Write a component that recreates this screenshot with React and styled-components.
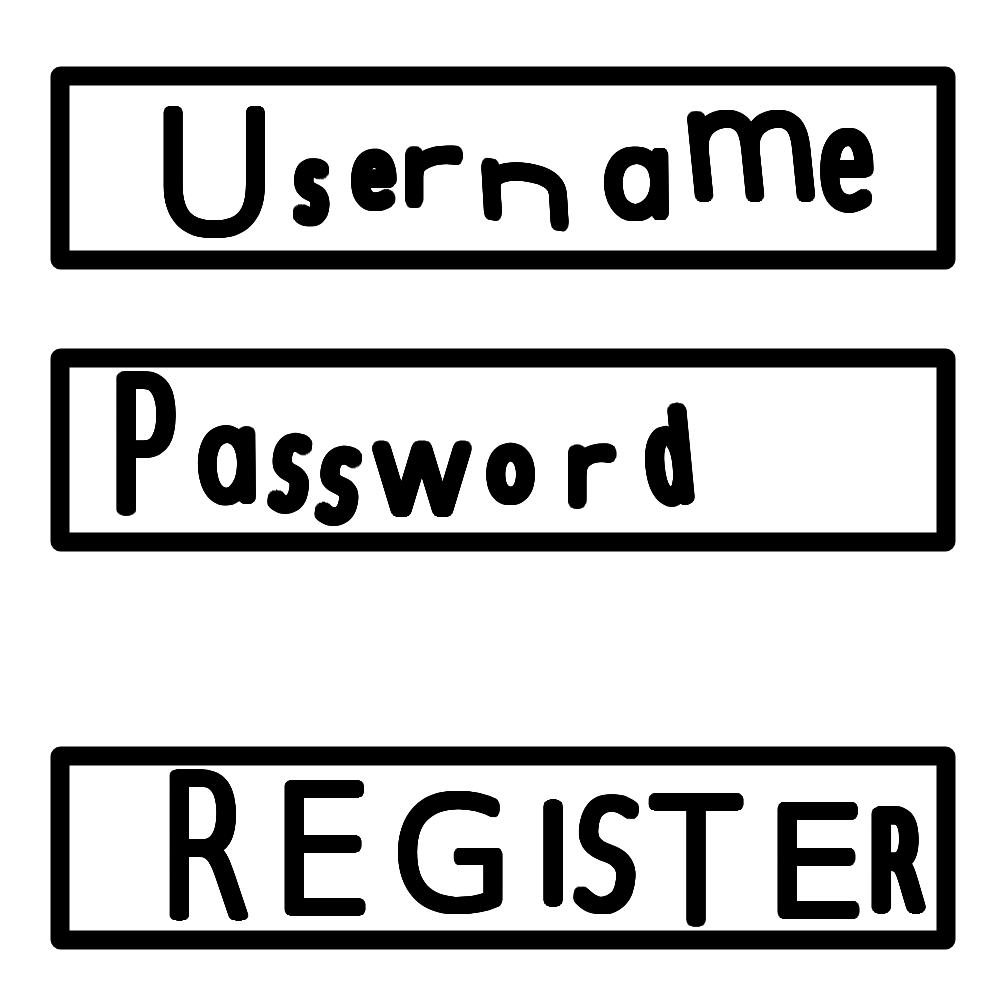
import React, { useMemo } from "react";
import styled, { createGlobalStyle } from "styled-components";

const STROKE = 19.6;
const SIZE = 100;

const FACES = {
  plain: {
    family: '"DejaVu Sans", sans-serif',
    weight: 200,
    style: "normal",
    stem: 5.4,
  },
  script: {
    family: '"Open Sans", sans-serif',
    weight: 300,
    style: "italic",
    stem: 6,
  },
};

const GlobalStyle = createGlobalStyle`
  * { box-sizing: border-box; }
  body { margin: 0; background: #fff; }
`;

const Page = styled.main`
  display: flex;
  flex-direction: column;
  width: 1000px;
  height: 1000px;
  padding: 66px 44px 50px 50px;
  background: #fff;
  overflow: hidden;
`;

const Box = styled.div`
  flex: none;
  width: 905px;
  height: 203px;
  margin-bottom: ${(p) => p.$after}px;
  border: 19px solid #000;
  border-radius: 10px;
  background: #fff;
  transform: translate(0.5px, 0.5px);
`;

const Word = styled.div`
  display: flex;
  align-items: flex-start;
`;

const Cell = styled.span`
  flex: none;
  width: ${(p) => p.$w}px;
  height: ${(p) => p.$h}px;
  margin-left: ${(p) => p.$gap}px;
  margin-top: ${(p) => p.$top}px;
`;

const Glyph = styled.span`
  display: block;
  width: max-content;
  height: ${SIZE}px;
  color: #000;
  font-family: ${(p) => p.$face.family};
  font-size: ${SIZE}px;
  font-weight: ${(p) => p.$face.weight};
  font-style: ${(p) => p.$face.style};
  line-height: ${SIZE}px;
  transform-origin: 0 0;
`;

const USERNAME = [
  { ch: "U", gap: 94, top: 21, w: 103, h: 132 },
  { ch: "s", gap: 26, top: 72, w: 38, h: 69, lean: 0.05 },
  { ch: "e", gap: 20, top: 64, w: 46, h: 62 },
  { ch: "r", gap: 8, top: 61, w: 60, h: 62 },
  { ch: "n", gap: 12, top: 78, w: 97, h: 62, turn: 9, lean: -0.1 },
  { ch: "a", gap: 36, top: 61, w: 59, h: 75, face: "script", lean: -0.22 },
  { ch: "m", gap: 18, top: 25, w: 129, h: 92, lean: -0.1 },
  { ch: "e", gap: 4, top: 43, w: 54, h: 84 },
];

const PASSWORD = [
  { ch: "P", gap: 47, top: 5, w: 60, h: 146 },
  { ch: "a", gap: 26, top: 58, w: 53, h: 80, face: "script", lean: -0.22 },
  { ch: "s", gap: 11, top: 65, w: 48, h: 81, lean: 0.22 },
  { ch: "s", gap: -1, top: 78, w: 51, h: 80, lean: 0.22 },
  { ch: "w", gap: 7, top: 74, w: 101, h: 76 },
  { ch: "o", gap: 13, top: 76, w: 50, h: 63 },
  { ch: "r", gap: 32, top: 76, w: 50, h: 65 },
  { ch: "d", gap: 22, top: 36, w: 56, h: 103, lean: -0.16 },
];

const REGISTER = [
  { ch: "R", gap: 100, top: 5, w: 80, h: 151 },
  { ch: "E", gap: 35, top: 16, w: 82, h: 135 },
  { ch: "G", gap: 31, top: 25, w: 105, h: 124 },
  { ch: "I", gap: 41, top: 34, w: 20, h: 108 },
  { ch: "S", gap: 8, top: 28, w: 71, h: 121, lean: 0.12 },
  { ch: "T", gap: 6, top: 28, w: 95, h: 134 },
  { ch: "E", gap: 34, top: 37, w: 83, h: 117 },
  { ch: "R", gap: 11, top: 42, w: 55, h: 107 },
];

/* Fits a thin glyph into its cell and thickens it to an even marker stroke. */
function markerStyle({ ch, w, h, lean = 0, turn = 0 }, face) {
  const ctx = document.createElement("canvas").getContext("2d");
  ctx.font = `${face.style} ${face.weight} ${SIZE}px ${face.family}`;
  const m = ctx.measureText(ch);
  const inkW = m.actualBoundingBoxRight + m.actualBoundingBoxLeft;
  const inkH = m.actualBoundingBoxAscent + m.actualBoundingBoxDescent;
  const baseline =
    (SIZE + m.fontBoundingBoxAscent - m.fontBoundingBoxDescent) / 2;
  const cx = (m.actualBoundingBoxRight - m.actualBoundingBoxLeft) / 2;
  const cy =
    baseline - (m.actualBoundingBoxAscent - m.actualBoundingBoxDescent) / 2;

  const spread = face.style === "italic" ? lean : Math.abs(lean);
  const run = inkW + spread * inkH - face.stem;
  const sx = run < 10 ? 1 : (w - STROKE) / run;
  const sy = (h - STROKE) / (inkH - face.stem);
  const penX = (STROKE - face.stem * sx) / 2;
  const penY = (STROKE - face.stem * sy) / 2;

  const t = (turn * Math.PI) / 180;
  const a = Math.cos(t) * sx;
  const b = Math.sin(t) * sx;
  const c = -Math.cos(t) * sx * lean - Math.sin(t) * sy;
  const d = -Math.sin(t) * sx * lean + Math.cos(t) * sy;
  const det = a * d - b * c;

  const shadows = [];
  [
    [1, 48],
    [0.55, 12],
  ].forEach(([reach, steps]) => {
    for (let i = 0; i < steps; i += 1) {
      const angle = (i / steps) * Math.PI * 2;
      const x = Math.cos(angle) * penX * reach;
      const y = Math.sin(angle) * penY * reach;
      const px = (d * x - c * y) / det;
      const py = (a * y - b * x) / det;
      shadows.push(`${px.toFixed(2)}px ${py.toFixed(2)}px 0 #000`);
    }
  });

  const e = w / 2 - (a * cx + c * cy);
  const f = h / 2 - (b * cx + d * cy);
  return {
    transform: `matrix(${[a, b, c, d, e, f].map((n) => n.toFixed(4)).join(",")})`,
    textShadow: shadows.join(","),
  };
}

function Letter({ letter }) {
  const face = FACES[letter.face || "plain"];
  const style = useMemo(() => markerStyle(letter, face), [letter, face]);
  return (
    <Cell $w={letter.w} $h={letter.h} $gap={letter.gap} $top={letter.top}>
      <Glyph $face={face} style={style}>
        {letter.ch}
      </Glyph>
    </Cell>
  );
}

function Handwriting({ letters }) {
  return (
    <Word>
      {letters.map((letter, i) => (
        <Letter key={i} letter={letter} />
      ))}
    </Word>
  );
}

export default function App() {
  return (
    <Page>
      <GlobalStyle />
      <Box $after={79}>
        <Handwriting letters={USERNAME} />
      </Box>
      <Box $after={195}>
        <Handwriting letters={PASSWORD} />
      </Box>
      <Box $after={0}>
        <Handwriting letters={REGISTER} />
      </Box>
    </Page>
  );
}
